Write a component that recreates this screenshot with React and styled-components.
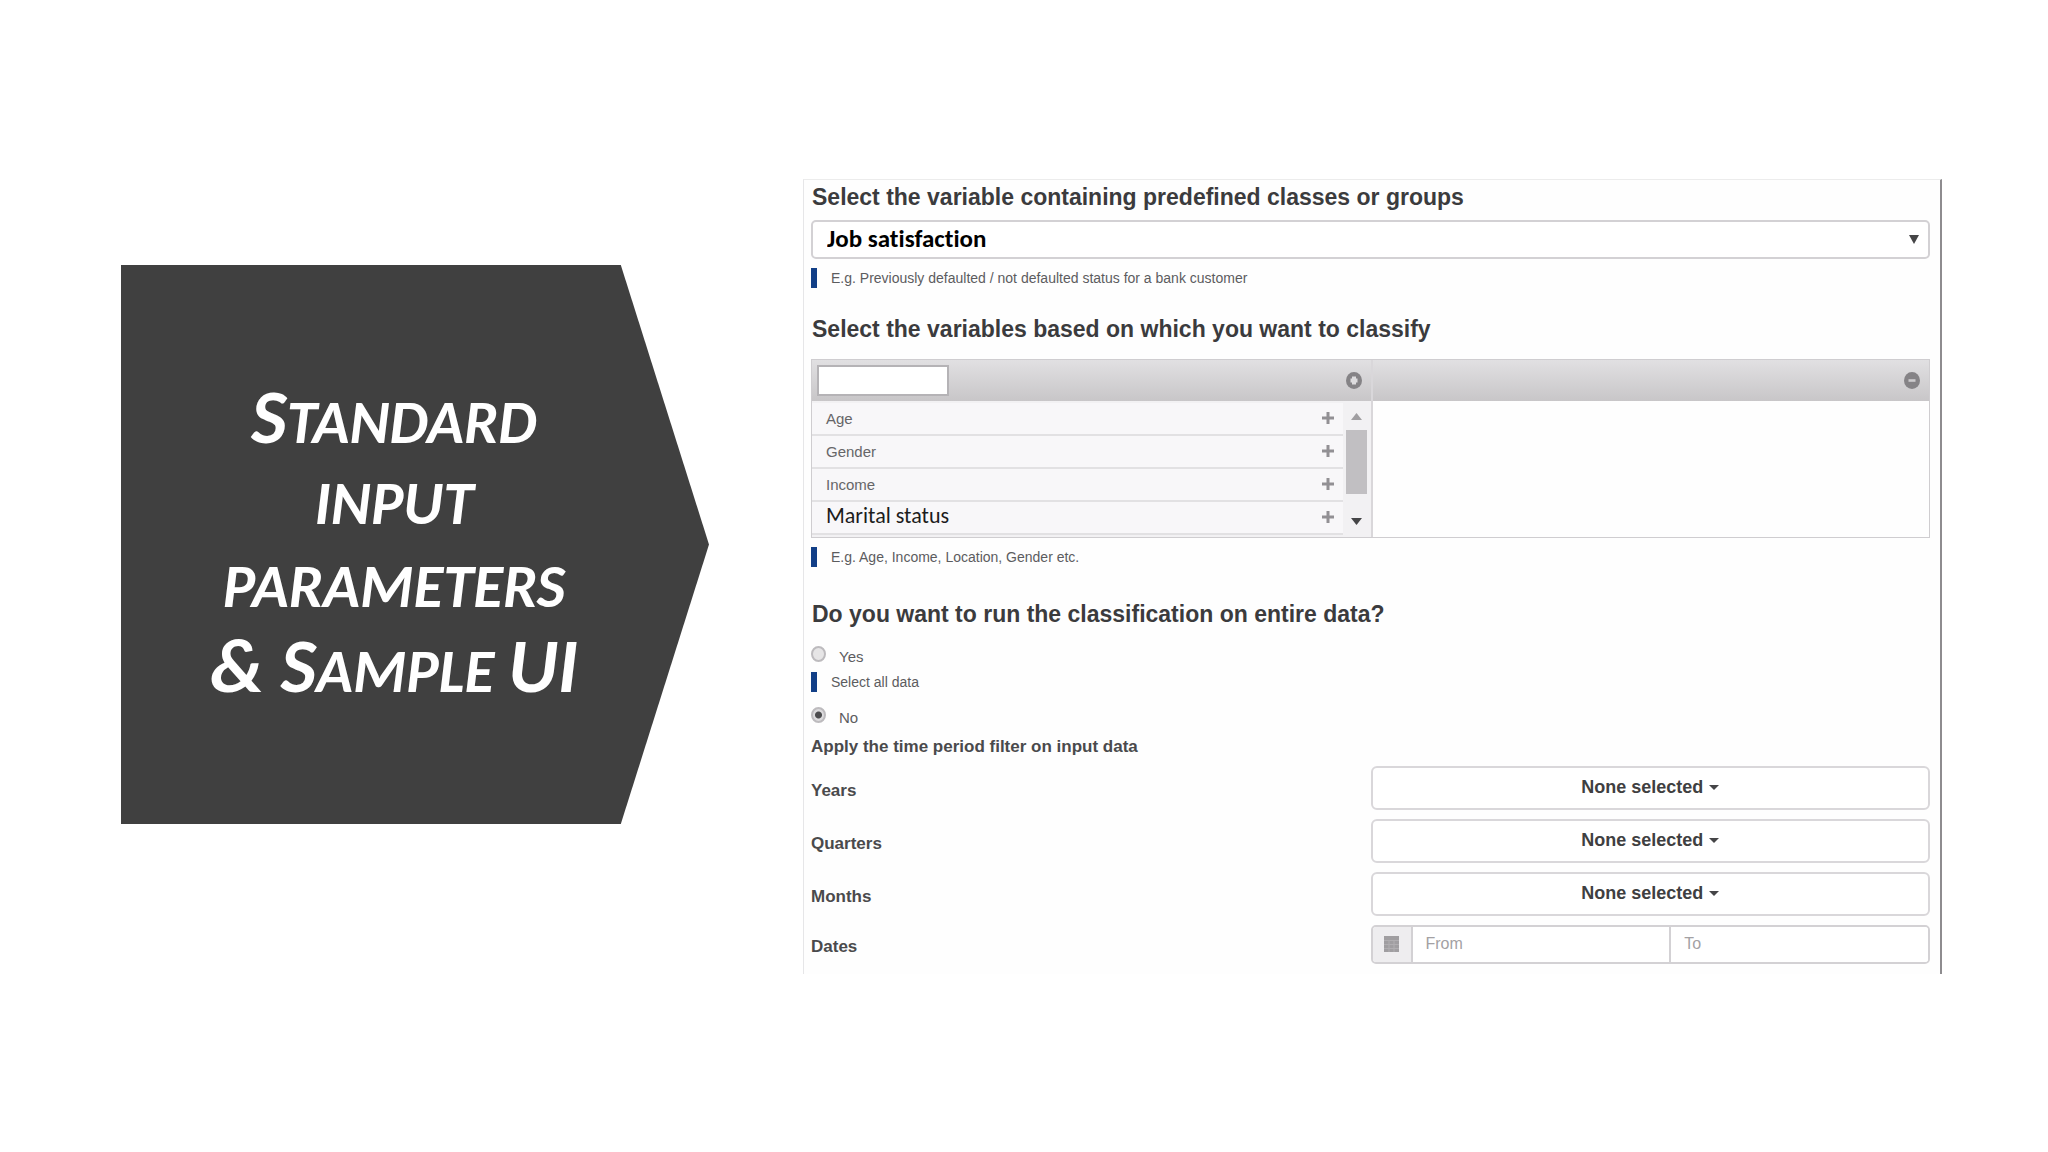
import { useState } from "react";
import styled, { createGlobalStyle } from "styled-components";

const GlobalStyle = createGlobalStyle`
  * {
    box-sizing: border-box;
  }

  body {
    margin: 0;
    background: #fff;
    color: #4a4a4c;
    font-family: "Liberation Sans", Arial, sans-serif;
    font-size: 15px;
    font-variant-ligatures: none;
  }

  button,
  input,
  select {
    font-family: inherit;
    font-variant-ligatures: none;
  }
`;

const Slide = styled.main`
  min-height: 100vh;
  padding: 0 106px 0 121px;
  display: grid;
  grid-template-columns: 588fr 1139fr;
  column-gap: 94px;
  align-items: center;
`;

const TitleShape = styled.header`
  min-height: 559px;
  margin-bottom: 63px;
  padding-right: 42px;
  display: flex;
  align-items: center;
  justify-content: center;
  background: #404040;
  clip-path: polygon(0 0, 85% 0, 100% 50%, 85% 100%, 0 100%);
`;

const Title = styled.h1`
  margin: 0;
  color: #fff;
  font-family: Carlito, Calibri, Lato, sans-serif;
  font-size: 61px;
  font-style: italic;
  font-weight: 700;
  line-height: 83px;
  text-align: center;
  text-transform: uppercase;
`;

const TitleLine = styled.span`
  display: block;
  height: 83px;
  white-space: nowrap;
`;

const Cap = styled.span`
  font-size: 76px;
  line-height: 1;
`;

const Panel = styled.form`
  min-height: 794px;
  padding: 3px 10px 10px 7px;
  border-top: 1px solid #ececec;
  border-left: 1px solid #e6e6e8;
  border-right: 2px solid #8e8c8f;
  background: #fefefe;
`;

const Question = styled.label`
  display: block;
  padding: 0 1px;
  color: #3b3b3d;
  font-size: 23px;
  font-weight: 700;
  line-height: 28px;
`;

const Section = styled.section`
  margin-top: 27px;
`;

const Fieldset = styled.fieldset`
  margin: 33px 0 0;
  padding: 0;
  border: 0;
`;

const SelectBox = styled.div`
  position: relative;
  margin-top: 9px;

  svg {
    position: absolute;
    top: 15px;
    right: 11px;
    pointer-events: none;
  }
`;

const Select = styled.select`
  display: block;
  width: 100%;
  height: 39px;
  padding: 0 14px 2px;
  appearance: none;
  border: 2px solid #d3d1d4;
  border-radius: 5px;
  background: #fff;
  color: #000;
  font-family: Carlito, Calibri, Lato, sans-serif;
  font-size: 25px;
  font-weight: 700;
`;

const Hint = styled.p`
  margin: 9px 0 0;
  padding-left: 14px;
  border-left: 6px solid #123f87;
  color: #5c5c5e;
  font-size: 14px;
  line-height: 20px;
`;

const Picker = styled.div`
  margin-top: 16px;
  display: grid;
  grid-template-columns: 1fr 1fr;
  border: 1px solid #cfcdd0;
`;

const Side = styled.div`
  display: flex;
  flex-direction: column;

  & + & {
    border-left: 2px solid #d9d7da;
  }
`;

const SideHeader = styled.div`
  height: 41px;
  padding: 0 9px 0 5px;
  display: flex;
  align-items: center;
  justify-content: space-between;
  background: linear-gradient(#e1e0e2, #c8c6c8);
`;

const SearchInput = styled.input`
  width: 132px;
  height: 31px;
  padding: 0 6px;
  border: 2px solid #b5b3b6;
  background: #fff;
`;

const IconButton = styled.button`
  margin-left: auto;
  padding: 0;
  display: flex;
  border: 0;
  background: none;
`;

const ListArea = styled.div`
  height: 136px;
  display: flex;
  background: #f2f1f3;
`;

const List = styled.ul`
  flex: 1;
  margin: 0;
  padding: 2px 0 0;
  list-style: none;
`;

const Item = styled.li`
  height: 33px;
  padding: 0 9px 0 14px;
  display: flex;
  align-items: center;
  justify-content: space-between;
  border-bottom: 2px solid #e2e1e3;
  background: #f8f7f9;
  color: #666668;
`;

const LargeText = styled.span`
  padding-bottom: 2px;
  color: #1c1c1c;
  font-family: Carlito, Calibri, Lato, sans-serif;
  font-size: 22px;
  line-height: 26px;
`;

const ScrollTrack = styled.div`
  width: 28px;
  padding: 12px 4px;
  display: flex;
  flex-direction: column;
  align-items: center;
`;

const ScrollThumb = styled.div`
  width: 21px;
  height: 64px;
  margin: 10px 0 auto;
  background: #c1bfc2;
`;

const RadioRow = styled.label`
  height: 20px;
  margin-top: ${(props) => props.$gap}px;
  display: flex;
  align-items: flex-start;
  gap: 13px;
  color: #5c5c5e;
  line-height: 28px;
`;

const Radio = styled.input`
  width: 15px;
  height: 16px;
  margin: 3px 0 0;
  appearance: none;
  border: 2px solid #bdbbbe;
  border-radius: 50%;
  background: #e6e5e6;

  &:checked {
    background: radial-gradient(circle, #4c4c4e 0 3px, #dcdbdd 4px);
  }
`;

const SubHeading = styled.h2`
  margin: 13px 0 0;
  color: #4a4a4c;
  font-size: 17px;
  font-weight: 700;
  line-height: 20px;
`;

const FilterRow = styled.div`
  margin-top: 9px;
  display: grid;
  grid-template-columns: 1fr 1fr;
  align-items: center;
`;

const FilterLabel = styled.label`
  padding-top: 6px;
  color: #4a4a4c;
  font-size: 17px;
  font-weight: 700;
  line-height: 20px;
`;

const DropButton = styled.button`
  height: 44px;
  padding: 0;
  display: flex;
  align-items: center;
  justify-content: center;
  gap: 6px;
  border: 2px solid #d9d7da;
  border-radius: 6px;
  background: #fff;
  color: #3f3f41;
  font-size: 18px;
  font-weight: 700;
`;

const DateGroup = styled.div`
  height: 39px;
  display: grid;
  grid-template-columns: 38px 1fr 1fr;
  border: 2px solid #d3d1d4;
  border-radius: 5px;
  overflow: hidden;
`;

const DateAddon = styled.span`
  display: flex;
  align-items: center;
  justify-content: center;
  background: #eeedef;
`;

const DateInput = styled.input`
  width: 100%;
  min-width: 0;
  padding: 0 13px;
  border: 0;
  border-left: 2px solid #d3d1d4;
  background: #fff;
  font-size: 16px;

  &::placeholder {
    color: #a3a1a4;
  }
`;

function Triangle({ up, width = 11, height = 7, color = "#454547" }) {
  return (
    <svg width={width} height={height} viewBox="0 0 10 10" preserveAspectRatio="none">
      <path d={up ? "M0 10L5 0L10 10Z" : "M0 0H10L5 10Z"} fill={color} />
    </svg>
  );
}

function Plus() {
  return (
    <svg width="12" height="12" viewBox="0 0 12 12">
      <path d="M6 0V12M0 6H12" stroke="#929094" strokeWidth="3" />
    </svg>
  );
}

function CirclePlus() {
  return (
    <svg width="16" height="17" viewBox="0 0 16 17">
      <ellipse cx="8" cy="8.5" rx="8" ry="8.5" fill="#858386" />
      <path d="M8 4.5V12.5M4.5 8.5H11.5" stroke="#dddcde" strokeWidth="4" />
    </svg>
  );
}

function CircleMinus() {
  return (
    <svg width="16" height="17" viewBox="0 0 16 17">
      <ellipse cx="8" cy="8.5" rx="8" ry="8.5" fill="#858386" />
      <path d="M4.5 8.5H11.5" stroke="#cccbcd" strokeWidth="2.6" />
    </svg>
  );
}

function Calendar() {
  return (
    <svg width="15" height="16" viewBox="0 0 15 16">
      <rect width="15" height="16" fill="#a09ea1" />
      <path d="M0 4.5H15M0 8.5H15M0 12.5H15M5 4V16M10 4V16" stroke="#b0aeb1" />
    </svg>
  );
}

const variables = ["Age", "Gender", "Income"];
const periods = ["Years", "Quarters", "Months"];

export default function App() {
  const [entire, setEntire] = useState("no");

  return (
    <>
      <GlobalStyle />
      <Slide>
        <TitleShape>
          <Title>
            <TitleLine>
              <Cap>S</Cap>tandard
            </TitleLine>
            <TitleLine>input</TitleLine>
            <TitleLine>parameters</TitleLine>
            <TitleLine>
              <Cap>&amp; S</Cap>ample <Cap>UI</Cap>
            </TitleLine>
          </Title>
        </TitleShape>

        <Panel>
          <Question htmlFor="target">
            Select the variable containing predefined classes or groups
          </Question>
          <SelectBox>
            <Select id="target">
              <option>Job satisfaction</option>
            </Select>
            <Triangle width={10} height={9} />
          </SelectBox>
          <Hint>
            E.g. Previously defaulted / not defaulted status for a bank customer
          </Hint>

          <Section>
            <Question htmlFor="search">
              Select the variables based on which you want to classify
            </Question>
            <Picker>
              <Side>
                <SideHeader>
                  <SearchInput id="search" type="text" />
                  <IconButton type="button" aria-label="Add all">
                    <CirclePlus />
                  </IconButton>
                </SideHeader>
                <ListArea>
                  <List>
                    {variables.map((name) => (
                      <Item key={name}>
                        {name}
                        <IconButton type="button" aria-label={`Add ${name}`}>
                          <Plus />
                        </IconButton>
                      </Item>
                    ))}
                    <Item>
                      <LargeText>Marital status</LargeText>
                      <IconButton type="button" aria-label="Add Marital status">
                        <Plus />
                      </IconButton>
                    </Item>
                  </List>
                  <ScrollTrack>
                    <Triangle up color="#a09ea1" />
                    <ScrollThumb />
                    <Triangle />
                  </ScrollTrack>
                </ListArea>
              </Side>
              <Side>
                <SideHeader>
                  <IconButton type="button" aria-label="Remove all">
                    <CircleMinus />
                  </IconButton>
                </SideHeader>
              </Side>
            </Picker>
            <Hint>E.g. Age, Income, Location, Gender etc.</Hint>
          </Section>

          <Fieldset>
            <Question as="legend">
              Do you want to run the classification on entire data?
            </Question>
            <RadioRow $gap={15}>
              <Radio
                type="radio"
                name="entire"
                checked={entire === "yes"}
                onChange={() => setEntire("yes")}
              />
              Yes
            </RadioRow>
            <Hint>Select all data</Hint>
            <RadioRow $gap={12}>
              <Radio
                type="radio"
                name="entire"
                checked={entire === "no"}
                onChange={() => setEntire("no")}
              />
              No
            </RadioRow>
          </Fieldset>

          <SubHeading>Apply the time period filter on input data</SubHeading>
          {periods.map((period) => (
            <FilterRow key={period}>
              <FilterLabel htmlFor={period}>{period}</FilterLabel>
              <DropButton id={period} type="button">
                None selected
                <Triangle width={10} height={5} />
              </DropButton>
            </FilterRow>
          ))}
          <FilterRow>
            <FilterLabel htmlFor="from">Dates</FilterLabel>
            <DateGroup>
              <DateAddon>
                <Calendar />
              </DateAddon>
              <DateInput id="from" type="text" placeholder="From" />
              <DateInput type="text" placeholder="To" aria-label="To" />
            </DateGroup>
          </FilterRow>
        </Panel>
      </Slide>
    </>
  );
}
